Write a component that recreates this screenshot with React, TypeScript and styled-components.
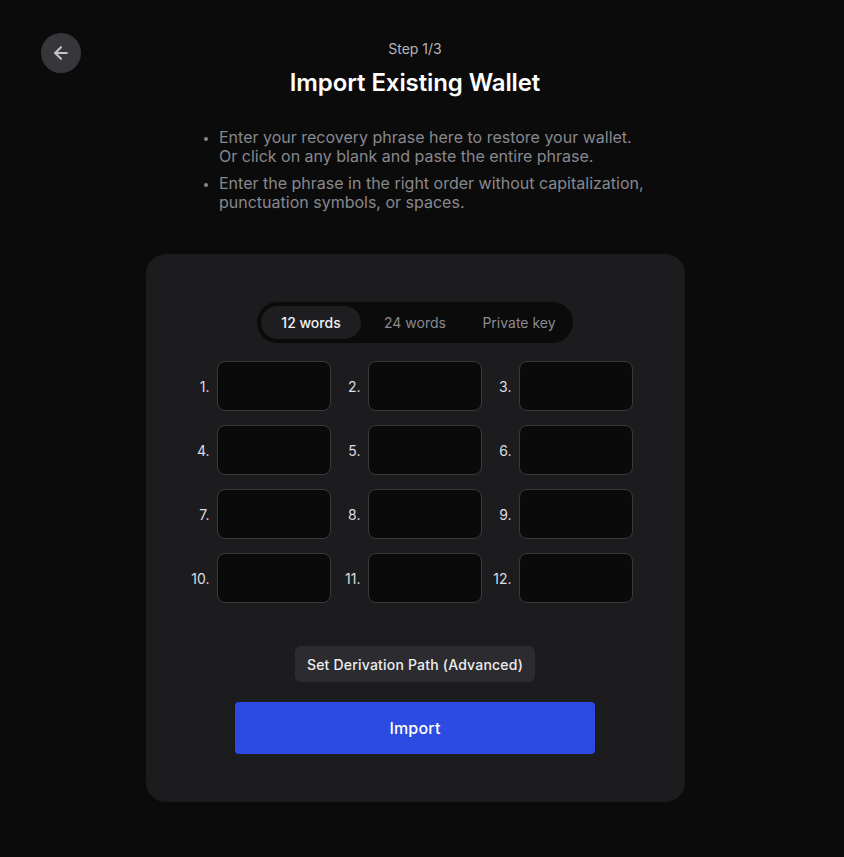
import React, { useState } from "react";
import styled, { createGlobalStyle } from "styled-components";
import { ArrowLeft } from "lucide-react";

const GlobalStyle = createGlobalStyle`
  html, body {
    margin: 0;
    padding: 0;
    background: #0b0b0c;
  }
  body {
    font-family: Inter, "Noto Sans", sans-serif;
    color: #ffffff;
  }
  * {
    box-sizing: border-box;
  }
`;

const Page = styled.div`
  min-height: 857px;
  padding: 33px 55px 40px 41px;
  display: flex;
  flex-direction: column;
  align-items: center;
  position: relative;
`;

const BackButton = styled.button`
  position: absolute;
  top: 33px;
  left: 41px;
  width: 40px;
  height: 40px;
  border-radius: 50%;
  border: none;
  background: #36363b;
  color: #c4c4c8;
  display: flex;
  align-items: center;
  justify-content: center;
  padding: 0;
  cursor: pointer;
`;

const Step = styled.div`
  margin-top: 6px;
  font-size: 14px;
  line-height: 20px;
  color: #b4b4b8;
`;

const Title = styled.h1`
  margin: 8px 0 0;
  font-size: 24px;
  line-height: 32px;
  font-weight: 600;
  letter-spacing: -0.1px;
  color: #ffffff;
`;

const Hints = styled.ul`
  width: 446px;
  margin: 29px 0 0 14px;
  padding: 0 0 0 20px;
  display: flex;
  flex-direction: column;
  gap: 8px;
  white-space: nowrap;
`;

const Hint = styled.li`
  font-size: 16px;
  line-height: 19px;
  color: #88888d;
  &::marker {
    font-size: 12px;
  }
`;

const Card = styled.div`
  margin-top: 42px;
  width: 539px;
  background: #1c1c1e;
  border-radius: 20px;
  padding: 48px 0 48px;
  display: flex;
  flex-direction: column;
  align-items: center;
`;

const Tabs = styled.div`
  display: flex;
  gap: 4px;
  padding: 4px;
  height: 41px;
  border-radius: 21px;
  background: #0b0b0c;
`;

const Tab = styled.button<{ $active?: boolean }>`
  width: 100px;
  height: 33px;
  border: none;
  border-radius: 17px;
  background: ${(p) => (p.$active ? "#1e1e21" : "transparent")};
  color: ${(p) => (p.$active ? "#f2f2f4" : "#8a8a8f")};
  font-family: Inter, sans-serif;
  font-size: 14px;
  font-weight: ${(p) => (p.$active ? 500 : 400)};
  cursor: pointer;
  padding: 0;
`;

const WordGrid = styled.div`
  margin-top: 18px;
  display: grid;
  grid-template-columns: repeat(3, 151px);
  row-gap: 14px;
  padding-right: 18px;
`;

const Cell = styled.label`
  display: flex;
  align-items: center;
  gap: 7px;
`;

const Num = styled.span`
  width: 30px;
  text-align: right;
  font-size: 14px;
  color: #dcdce0;
`;

const WordInput = styled.input`
  width: 114px;
  height: 50px;
  background: #0a0a0b;
  border: 1px solid #3a3a3e;
  border-radius: 8px;
  color: #fff;
  font-family: Inter, sans-serif;
  font-size: 14px;
  padding: 0 10px;
  outline: none;
`;

const Advanced = styled.button`
  margin-top: 43px;
  height: 36px;
  padding: 0 12px;
  border: none;
  border-radius: 6px;
  background: #2c2c30;
  color: #ececef;
  font-family: Inter, sans-serif;
  font-size: 14px;
  font-weight: 500;
  letter-spacing: 0.2px;
  cursor: pointer;
`;

const ImportButton = styled.button`
  margin-top: 20px;
  width: 360px;
  height: 52px;
  border: none;
  border-radius: 4px;
  background: #2b4be3;
  color: #ffffff;
  font-family: Inter, sans-serif;
  font-size: 16px;
  font-weight: 500;
  letter-spacing: 0.2px;
  cursor: pointer;
`;

const tabs = ["12 words", "24 words", "Private key"];

export default function App() {
  const [active, setActive] = useState(0);
  const [words, setWords] = useState<string[]>(Array(12).fill(""));

  return (
    <>
      <GlobalStyle />
      <Page>
        <BackButton aria-label="Back">
          <ArrowLeft size={20} strokeWidth={2.5} />
        </BackButton>
        <Step>Step 1/3</Step>
        <Title>Import Existing Wallet</Title>
        <Hints>
          <Hint>
            Enter your recovery phrase here to restore your wallet.
            <br />
            Or click on any blank and paste the entire phrase.
          </Hint>
          <Hint>
            Enter the phrase in the right order without capitalization,
            <br />
            punctuation symbols, or spaces.
          </Hint>
        </Hints>
        <Card>
          <Tabs>
            {tabs.map((t, i) => (
              <Tab key={t} $active={i === active} onClick={() => setActive(i)}>
                {t}
              </Tab>
            ))}
          </Tabs>
          <WordGrid>
            {words.map((w, i) => (
              <Cell key={i}>
                <Num>{i + 1}.</Num>
                <WordInput
                  value={w}
                  onChange={(e) => {
                    const next = [...words];
                    next[i] = e.target.value;
                    setWords(next);
                  }}
                />
              </Cell>
            ))}
          </WordGrid>
          <Advanced>Set Derivation Path (Advanced)</Advanced>
          <ImportButton>Import</ImportButton>
        </Card>
      </Page>
    </>
  );
}
